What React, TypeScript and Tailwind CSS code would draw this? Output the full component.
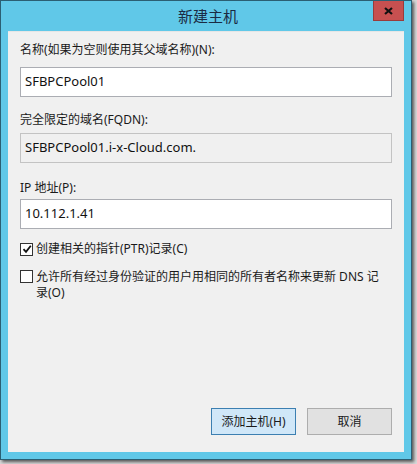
import React from "react";

const font = { fontFamily: '"Segoe UI", "Noto Sans", "Noto Sans CJK SC", sans-serif' };

function TextBox({ value, readOnly }: { value: string; readOnly?: boolean }) {
  return (
    <div
      className={`h-[30px] border border-[#abadb3] flex items-center pl-[4px] text-[13px] text-[#111] ${
        readOnly ? "bg-[#f0f0f0] border-[#c3c3c3]" : "bg-white"
      }`}
    >
      {value}
    </div>
  );
}

function CheckBox({ checked }: { checked?: boolean }) {
  return (
    <div className="w-[13px] h-[13px] border border-[#333] bg-white flex items-center justify-center shrink-0">
      {checked && (
        <svg width="10" height="10" viewBox="0 0 10 10">
          <path d="M1.5 5.2 L4 7.8 L8.8 1.8" stroke="#111" strokeWidth="1.8" fill="none" />
        </svg>
      )}
    </div>
  );
}

export default function App() {
  return (
    <div className="w-[417px] h-[464px] bg-[#d8d8d8]" style={font}>
      <div className="w-[412px] h-[460px] border border-[#2b5f73] bg-[#60c8e8] flex flex-col shadow-[2px_2px_3px_rgba(0,0,0,0.6)]">
        <div className="h-[30px] flex relative">
          <div className="flex-1 flex items-center justify-center text-[15px] text-[#1b2b44] pt-[1px] pl-[4px]">
            新建主机
          </div>
          <div className="absolute right-[7px] top-0 w-[31px] h-[20px] bg-[#c75050] border border-[#9a3b3b] border-t-0 flex items-center justify-center">
            <svg width="9" height="8" viewBox="0 0 9 8">
              <path d="M1 1 L8 7 M8 1 L1 7" stroke="#111" strokeWidth="2.2" />
            </svg>
          </div>
        </div>
        <div className="mx-[7px] h-[421px] bg-[#f0f0f0] border-t border-[#e6e6e6] flex flex-col px-[12px] text-[12px] text-[#1a1a1a]">
          <div className="mt-[10px] h-[16px] leading-[16px]">名称(如果为空则使用其父域名称)(N):</div>
          <div className="mt-[9px]">
            <TextBox value="SFBPCPool01" />
          </div>
          <div className="mt-[15px] h-[16px] leading-[16px]">完全限定的域名(FQDN):</div>
          <div className="mt-[5px]">
            <TextBox value="SFBPCPool01.i-x-Cloud.com." readOnly />
          </div>
          <div className="mt-[17px] h-[16px] leading-[16px]">IP 地址(P):</div>
          <div className="mt-[3px]">
            <TextBox value="10.112.1.41" />
          </div>
          <div className="mt-[12px] flex items-center gap-[3px] h-[16px]">
            <CheckBox checked />
            <span className="leading-[16px]">创建相关的指针(PTR)记录(C)</span>
          </div>
          <div className="mt-[12px] flex items-start gap-[3px]">
            <div className="mt-[1px]">
              <CheckBox />
            </div>
            <span className="leading-[16px]">
              允许所有经过身份验证的用户用相同的所有者名称来更新 DNS 记
              <br />
              录(O)
            </span>
          </div>
          <div className="flex-1" />
          <div className="flex justify-end gap-[11px] mb-[17px]">
            <div className="w-[85px] h-[27px] border border-[#3c7fb1] bg-[#d0e7f8] flex items-center justify-center">
              添加主机(H)
            </div>
            <div className="w-[85px] h-[27px] border border-[#adadad] bg-[#e1e1e1] flex items-center justify-center">
              取消
            </div>
          </div>
        </div>
      </div>
    </div>
  );
}
